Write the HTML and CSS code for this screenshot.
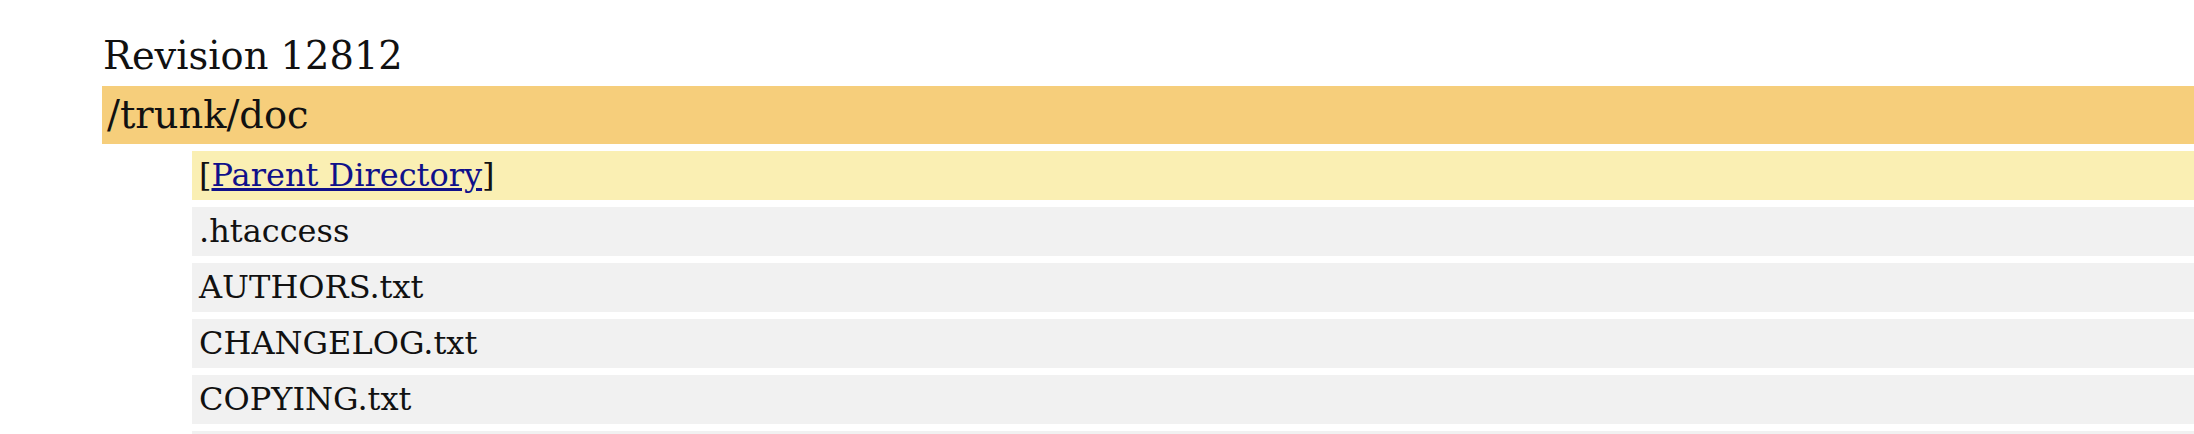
FILE: index.html
```html
<!DOCTYPE html>
<html>
<head>
<meta charset="utf-8">
<title>Revision 12812: /trunk/doc</title>
<link rel="stylesheet" href="styles.css">
</head>
<body>
<div class="page">
  <h2 class="rev">Revision 12812</h2>
  <div class="path">/trunk/doc</div>
  <ul class="listing">
    <li class="item parent">[<a href="#">Parent Directory</a>]</li>
    <li class="item">.htaccess</li>
    <li class="item">AUTHORS.txt</li>
    <li class="item">CHANGELOG.txt</li>
    <li class="item">COPYING.txt</li>
    <li class="item">INSTALL.txt</li>
  </ul>
</div>
</body>
</html>
```

FILE: styles.css
```css
html, body {
  margin: 0;
  padding: 0;
  background: #ffffff;
  overflow: hidden;
}
body {
  font-family: "DejaVu Serif", serif;
  color: #111111;
}
.page {
  padding: 0 0 0 102px;
}
.rev {
  margin: 0;
  padding: 33px 0 0 1px;
  height: 86px;
  box-sizing: border-box;
  font-size: 38.4px;
  font-weight: normal;
  line-height: 45px;
}
.path {
  background: #f6ce7b;
  height: 58px;
  box-sizing: border-box;
  padding: 0 0 0 5px;
  font-size: 38.4px;
  line-height: 58px;
}
.listing {
  list-style: none;
  margin: 0;
  padding: 6.5px 0 0 90px;
  display: flex;
  flex-direction: column;
  gap: 6.5px;
}
.item {
  background: #f1f1f1;
  height: 49.5px;
  box-sizing: border-box;
  padding: 0 0 0 7px;
  font-size: 32px;
  line-height: 49.5px;
}
.parent {
  background: #faefb3;
}
.parent a {
  color: #10108a;
  text-decoration: underline;
}
```
